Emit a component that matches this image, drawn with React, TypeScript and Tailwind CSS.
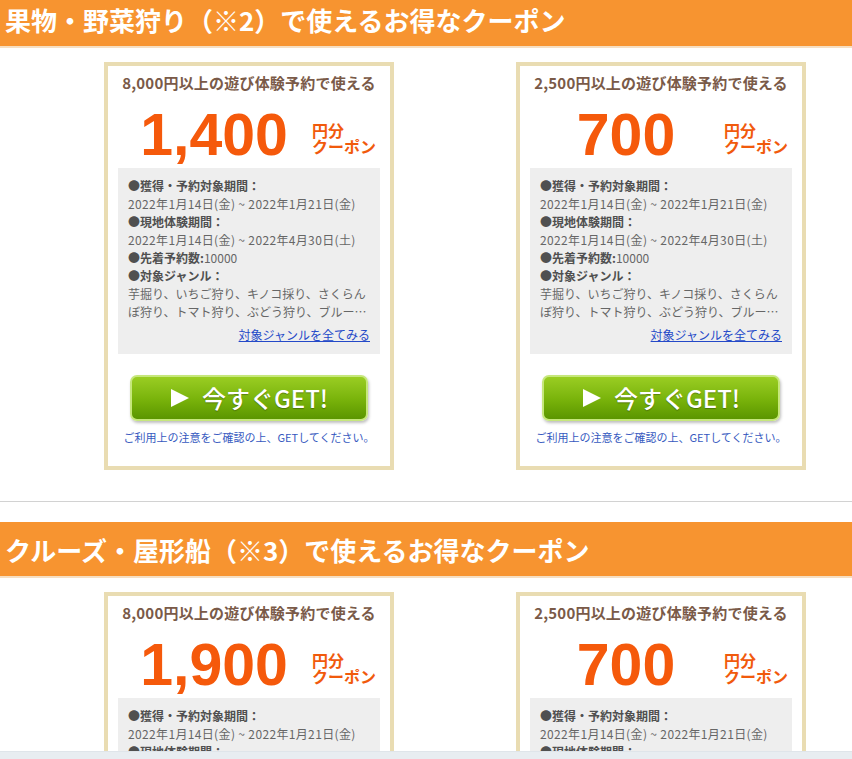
const JP = { fontFamily: '"Noto Sans CJK JP", "Noto Sans", sans-serif' }

interface Coupon {
  min:    string
  amount: string
}

interface Block {
  title:   string
  coupons: Coupon[]
}

const blocks: Block[] = [
  {
    title: '果物・野菜狩り（※2）で使えるお得なクーポン',
    coupons: [
      { min: '8,000', amount: '1,400' },
      { min: '2,500', amount: '700' },
    ],
  },
  {
    title: 'クルーズ・屋形船（※3）で使えるお得なクーポン',
    coupons: [
      { min: '8,000', amount: '1,900' },
      { min: '2,500', amount: '700' },
    ],
  },
]

function Label({ children }: { children: React.ReactNode }) {
  return <p className="font-bold text-[#505050]">●{children}</p>
}

function CouponCard({ c }: { c: Coupon }) {
  return (
    <div className="w-[290px] border-4 border-[#e9dcb2] bg-white flex flex-col">
      <p className="pt-[8px] text-center text-[15px] leading-[18px] font-bold text-[#7a5a48] tracking-[0.2px]">
        {c.min}円以上の遊び体験予約で使える
      </p>

      {/* Amount */}
      <div className="mt-[14px] mb-[4px] h-[58px] flex items-center">
        <span
          className="ml-[8px] w-[196px] text-center text-[59px] leading-[58px] font-bold text-[#f5590b]"
          style={{ fontFamily: '"Liberation Sans", Arial, sans-serif' }}
        >
          {c.amount}
        </span>
        <span className="mt-[6px] text-[16px] leading-[16px] font-bold text-[#f15a0c]">
          円分<br />クーポン
        </span>
      </div>

      {/* Details */}
      <div className="mx-[10px] h-[186px] bg-[#eeeeee] px-[10px] pt-[9px] text-[12px] leading-[18px] text-[#666]">
        <Label>獲得・予約対象期間：</Label>
        <p className="tracking-[0.35px]">2022年1月14日(金) ~ 2022年1月21日(金)</p>
        <Label>現地体験期間：</Label>
        <p className="tracking-[0.35px]">2022年1月14日(金) ~ 2022年4月30日(土)</p>
        <p><span className="font-bold text-[#505050]">●先着予約数:</span>10000</p>
        <Label>対象ジャンル：</Label>
        <p className="line-clamp-2">
          芋掘り、いちご狩り、キノコ採り、さくらんぼ狩り、トマト狩り、ぶどう狩り、ブルーベリー狩り、みかん狩り、りんご狩り
        </p>
        <p className="mt-[5px] text-right">
          <a href="#" className="text-[#2449c8] underline">対象ジャンルを全てみる</a>
        </p>
      </div>

      {/* Button */}
      <div className="mt-[21px] flex justify-center">
        <button
          className="w-[238px] h-[46px] rounded-[7px] border-2 border-[#c6e77c] bg-gradient-to-b from-[#9acd22] via-[#7bb50c] to-[#5b9600] shadow-[1px_2px_3px_rgba(0,0,0,0.25)] flex items-center justify-center gap-[12px] text-white text-[24px] leading-none font-medium [text-shadow:0_1px_1px_rgba(0,0,0,0.3)]"
        >
          <svg width="20" height="20" viewBox="0 0 20 20"><path d="M1 1 L19 10 L1 19 Z" fill="#fff" /></svg>
          <span>今すぐGET!</span>
        </button>
      </div>

      <p className="mt-[8px] pb-[21px] text-center text-[11px] leading-[16px] text-[#3659c0]">
        ご利用上の注意をご確認の上、GETしてください。
      </p>
    </div>
  )
}

export default function App() {
  return (
    <div className="w-[852px] bg-white overflow-hidden" style={JP}>
      <div className="-mt-[8px]">
        {blocks.map((b, i) => (
          <section key={b.title}>
            {i > 0 && <div className="mt-[31px] mb-[20px] h-px bg-[#d2d2d2]" />}
            <h2 className="h-[56px] bg-[#f79430] border-b-2 border-[#f6dfc2] flex items-center pl-[5px] text-[26px] font-bold text-white">
              {b.title}
            </h2>
            <div className="pt-[14px] pl-[104px] flex gap-[122px]">
              {b.coupons.map((c, j) => <CouponCard key={j} c={c} />)}
            </div>
          </section>
        ))}
        <div className="h-[40px]" />
      </div>
      <div className="fixed left-0 right-0 bottom-0 h-[8px] bg-[#e8edf1] border-t border-[#dfe5ea]" />
    </div>
  )
}
